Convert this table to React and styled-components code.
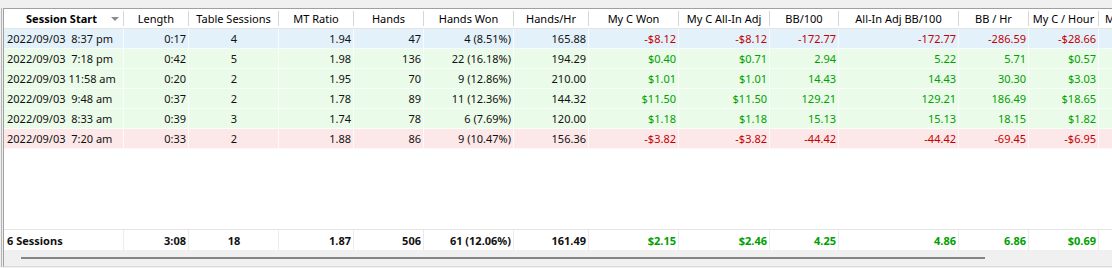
import React from 'react'
import styled, { createGlobalStyle } from 'styled-components'

const GlobalStyle = createGlobalStyle`
  html, body {
    margin: 0;
    padding: 0;
    background: #f0f0f0;
    font-family: 'Noto Sans', 'Open Sans', sans-serif;
    font-size: 11px;
    color: #000;
  }
`

const COLS = '120px 65px 90px 75px 70px 90px 75px 90px 91px 69px 120px 70px 70px 104px'

const Outer = styled.div`
  margin: 8px 0 0 1px;
  border-left: 1px solid #b4b4b4;
  padding-left: 1px;
  height: 259px;
`

const Frame = styled.div`
  height: 259px;
  box-sizing: border-box;
  border-top: 1px solid #a0a0a0;
  border-left: 1px solid #a0a0a0;
  border-bottom: 1px solid #dadada;
  background: #fff;
  display: flex;
  flex-direction: column;
  overflow: hidden;
`

const Header = styled.div`
  display: grid;
  grid-template-columns: ${COLS};
  height: 20px;
  box-sizing: border-box;
  border-bottom: 1px solid #e5e5e5;
  flex-shrink: 0;
`

const HeadCell = styled.div`
  display: flex;
  align-items: center;
  overflow: hidden;
  font-weight: ${(p) => (p.$bold ? 700 : 400)};
`

const HeadLabel = styled.span`
  flex: 1;
  text-align: center;
  white-space: nowrap;
  overflow: hidden;
  padding-left: ${(p) => (p.$sorted ? '12px' : '0')};
`

const SortArrow = styled.span`
  width: 0;
  height: 0;
  border-left: 4px solid transparent;
  border-right: 4px solid transparent;
  border-top: 4px solid #8c8c8c;
  margin: 1px 4px 0 4px;
  flex-shrink: 0;
`

const Sep = styled.span`
  width: 1px;
  height: 15px;
  background: #d6d6d6;
  flex-shrink: 0;
`

const Body = styled.div`
  flex: 1;
  background: #fff;
`

const BG = {
  blue: '#e3f1fb',
  green: '#ebfbe9',
  pink: '#fde8e9',
  white: '#fff',
}

const Row = styled.div`
  display: grid;
  grid-template-columns: ${COLS};
  height: 20px;
  box-sizing: border-box;
  background: ${(p) => BG[p.$tone]};
  border-bottom: 1px solid rgba(255, 255, 255, 0.7);
`

const Cell = styled.div`
  display: flex;
  align-items: center;
  justify-content: ${(p) =>
    p.$align === 'left' ? 'flex-start' : p.$align === 'center' ? 'center' : 'flex-end'};
  padding: 0 2px 0 3px;
  white-space: pre;
  overflow: hidden;
  color: ${(p) => (p.$color ? p.$color : '#111')};
  border-right: 1px solid rgba(255, 255, 255, 0.75);
`

const TotalRow = styled.div`
  display: grid;
  grid-template-columns: ${COLS};
  height: 21px;
  box-sizing: border-box;
  border-top: 1px solid #e6e6e6;
  background: #fff;
  font-weight: 700;
  flex-shrink: 0;
`

const TotalCell = styled(Cell)`
  border-right: 1px solid #ececec;
`

const ScrollTrack = styled.div`
  height: 16px;
  background: #f0f0f0;
  flex-shrink: 0;
  display: flex;
  align-items: center;
`

const ScrollThumb = styled.div`
  margin-left: 17px;
  width: 964px;
  height: 2px;
  background: #858585;
`

const columns = [
  { title: 'Session Start', align: 'left', sorted: true },
  { title: 'Length' },
  { title: 'Table Sessions', align: 'center' },
  { title: 'MT Ratio' },
  { title: 'Hands' },
  { title: 'Hands Won' },
  { title: 'Hands/Hr' },
  { title: 'My C Won', signed: true },
  { title: 'My C All-In Adj', signed: true },
  { title: 'BB/100', signed: true },
  { title: 'All-In Adj BB/100', signed: true },
  { title: 'BB / Hr', signed: true },
  { title: 'My C / Hour', signed: true },
  { title: 'My C All-In / Hour', signed: true },
]

const sessions = [
  ['blue', ['2022/09/03  8:37 pm', '0:17', '4', '1.94', '47', '4 (8.51%)', '165.88', '-$8.12', '-$8.12', '-172.77', '-172.77', '-286.59', '-$28.66', '']],
  ['green', ['2022/09/03  7:18 pm', '0:42', '5', '1.98', '136', '22 (16.18%)', '194.29', '$0.40', '$0.71', '2.94', '5.22', '5.71', '$0.57', '']],
  ['green', ['2022/09/03 11:58 am', '0:20', '2', '1.95', '70', '9 (12.86%)', '210.00', '$1.01', '$1.01', '14.43', '14.43', '30.30', '$3.03', '']],
  ['green', ['2022/09/03  9:48 am', '0:37', '2', '1.78', '89', '11 (12.36%)', '144.32', '$11.50', '$11.50', '129.21', '129.21', '186.49', '$18.65', '']],
  ['green', ['2022/09/03  8:33 am', '0:39', '3', '1.74', '78', '6 (7.69%)', '120.00', '$1.18', '$1.18', '15.13', '15.13', '18.15', '$1.82', '']],
  ['pink', ['2022/09/03  7:20 am', '0:33', '2', '1.88', '86', '9 (10.47%)', '156.36', '-$3.82', '-$3.82', '-44.42', '-44.42', '-69.45', '-$6.95', '']],
]

const totals = ['6 Sessions', '3:08', '18', '1.87', '506', '61 (12.06%)', '161.49', '$2.15', '$2.46', '4.25', '4.86', '6.86', '$0.69', '']

const signColor = (col, value) => {
  if (!col.signed || !value) return null
  return value.startsWith('-') ? '#c40000' : '#00a000'
}

const App = () => {
  return (
    <>
      <GlobalStyle />
      <Outer>
        <Frame>
          <Header>
            {columns.map((col, i) => (
              <HeadCell key={i} $bold={col.sorted}>
                <HeadLabel $sorted={col.sorted}>{col.title}</HeadLabel>
                {col.sorted && <SortArrow />}
                <Sep />
              </HeadCell>
            ))}
          </Header>
          <Body>
            {sessions.map(([tone, values], r) => (
              <Row key={r} $tone={tone}>
                {values.map((v, i) => (
                  <Cell key={i} $align={columns[i].align} $color={signColor(columns[i], v)}>
                    {v}
                  </Cell>
                ))}
              </Row>
            ))}
          </Body>
          <TotalRow>
            {totals.map((v, i) => (
              <TotalCell key={i} $align={columns[i].align} $color={signColor(columns[i], v)}>
                {v}
              </TotalCell>
            ))}
          </TotalRow>
          <ScrollTrack>
            <ScrollThumb />
          </ScrollTrack>
        </Frame>
      </Outer>
    </>
  )
}

export default App
